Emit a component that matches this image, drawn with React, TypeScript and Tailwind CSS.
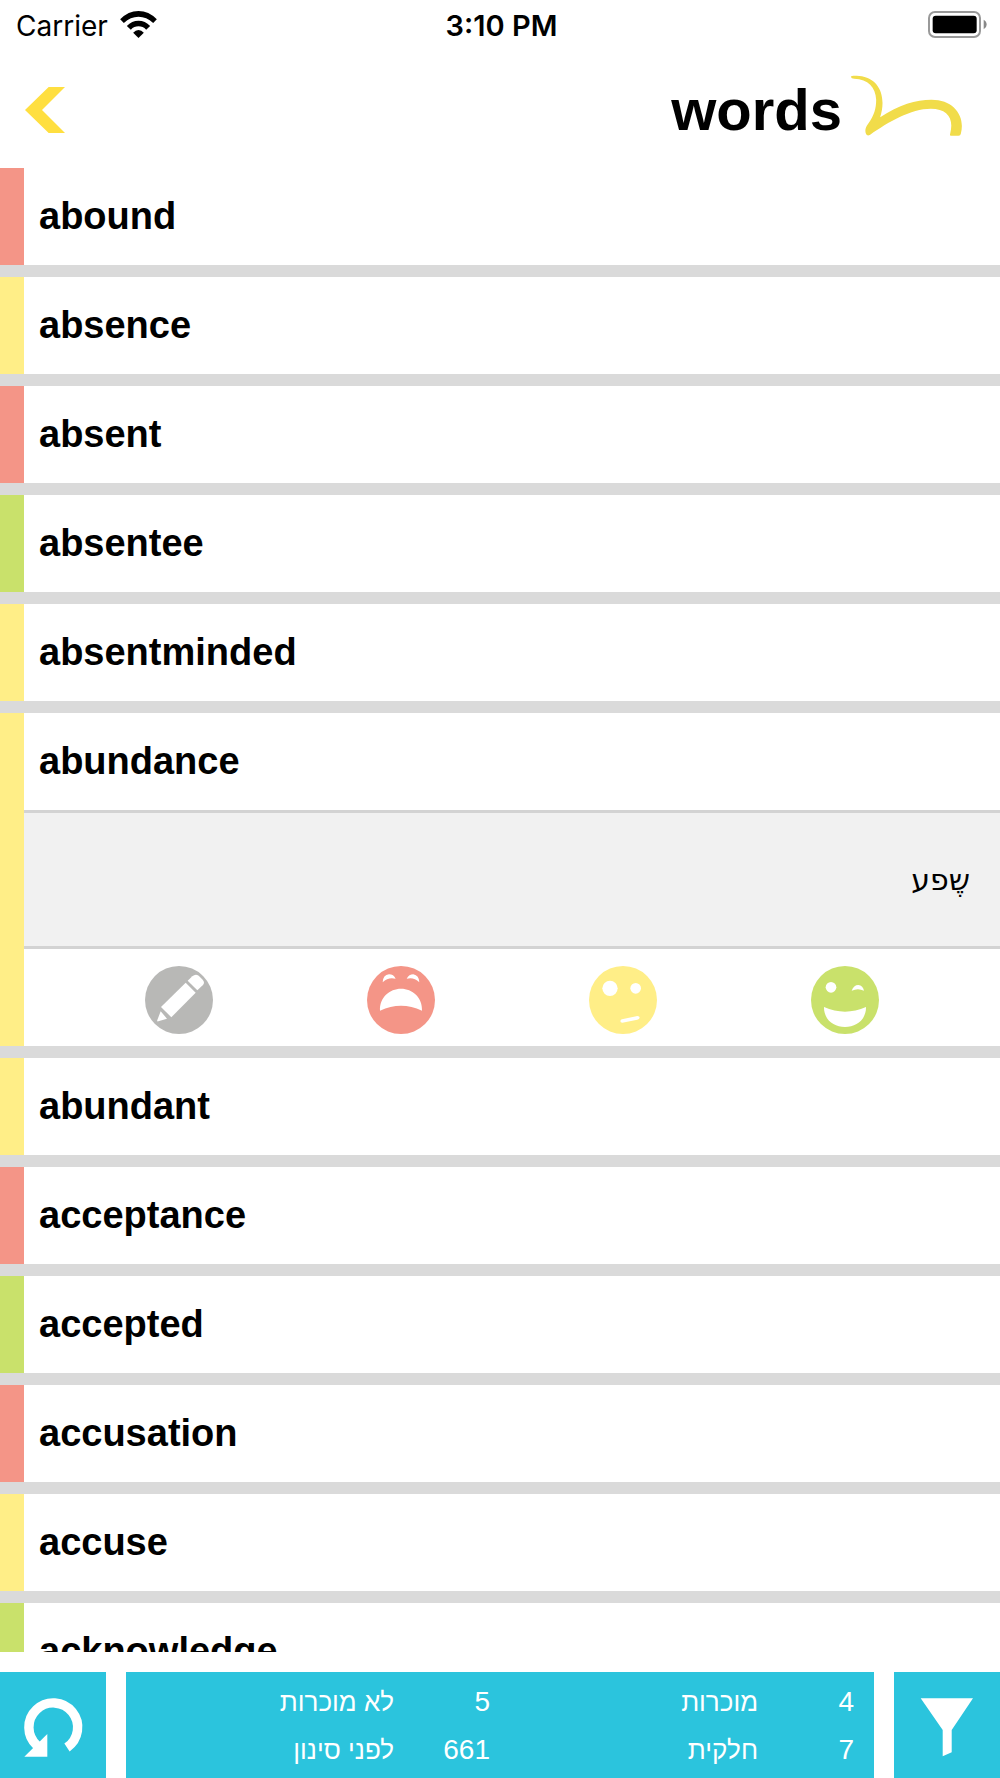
import { useState } from "react";
import type { ReactNode } from "react";
import { clsx } from "clsx";

type Level = "known" | "partial" | "unknown";

type Word = {
  text: string;
  level: Level;
  translation?: string;
};

const words: Word[] = [
  { text: "abound", level: "unknown" },
  { text: "absence", level: "partial" },
  { text: "absent", level: "unknown" },
  { text: "absentee", level: "known" },
  { text: "absentminded", level: "partial" },
  { text: "abundance", level: "partial", translation: "שֶפע" },
  { text: "abundant", level: "partial" },
  { text: "acceptance", level: "unknown" },
  { text: "accepted", level: "known" },
  { text: "accusation", level: "unknown" },
  { text: "accuse", level: "partial" },
  { text: "acknowledge", level: "known" },
];

const levelColors: Record<Level, string> = {
  known: "border-[#c9e16b]",
  partial: "border-[#ffee87]",
  unknown: "border-[#f49587]",
};

const stats = [
  { label: "מוכרות", value: 4 },
  { label: "לא מוכרות", value: 5 },
  { label: "חלקית", value: 7 },
  { label: "לפני סינון", value: 661 },
];

function StatusBar() {
  return (
    <div className="grid h-[52px] grid-cols-3 items-center pr-[13px] pl-4 font-[Inter,sans-serif] text-[28px]">
      <div className="flex items-center gap-3">
        <span>Carrier</span>
        <svg className="mb-1 h-[27px] w-[37px]" viewBox="0 0 110 81" aria-hidden="true">
          <path d="M0 25Q24 0 55 0Q86 0 110 25L99 36Q79 17 55 17Q31 17 11 36Z" />
          <path d="M20 45Q35 29 55 29Q75 29 90 45L78 56Q68 46 55 46Q42 46 32 56Z" />
          <path d="M39 65Q46 57 55 57Q64 57 71 65L55 81Z" />
        </svg>
      </div>
      <span className="text-center text-[29px] font-semibold">3:10 PM</span>
      <svg className="mb-1 h-[27px] w-[59px] justify-self-end" viewBox="0 0 177 81" aria-hidden="true">
        <rect x="3" y="3" width="153" height="75" rx="18" fill="none" stroke="#999" strokeWidth="6" />
        <rect x="14" y="14" width="132" height="53" rx="9" />
        <path d="M167 26Q176 31 176 41Q176 50 167 55Z" fill="#888" />
      </svg>
    </div>
  );
}

function Header() {
  return (
    <header className="flex h-[116px] items-center justify-between pr-[37px] pl-[25px]">
      <button type="button" aria-label="Back">
        <svg className="h-[46px] w-10" viewBox="0 0 120 138" fill="#ffdf40" aria-hidden="true">
          <path d="M71 0H120L51 69L120 138H71L0 69Z" />
        </svg>
      </button>
      <div className="flex items-center gap-2">
        <h1 className="text-[58px] leading-none font-bold">words</h1>
        <svg className="mb-2 h-[62px] w-[113px]" viewBox="628 226 338 186" fill="#f1dc4a" aria-hidden="true">
          <path d="M630 231C632 227 645 228 655 229C715 234 738 290 718 353C775 315 825 300 872 300C940 300 974 350 960 402Q959 408 953 408H930Q926 408 928 402C940 356 920 327 870 327C810 327 742 367 688 405Q680 410 676 404C671 393 674 382 682 372C700 347 706 326 706 300C704 262 682 239 640 237Q631 237 630 231Z" />
        </svg>
      </div>
    </header>
  );
}

function RateButton({ label, color, children }: { label: string; color: string; children: ReactNode }) {
  return (
    <button type="button" aria-label={label}>
      <svg className="size-[68px]" viewBox="0 0 204 204" fill="#fff" aria-hidden="true">
        <circle cx="102" cy="102" r="102" fill={color} />
        {children}
      </svg>
    </button>
  );
}

function WordDetails({ translation }: { translation: string }) {
  return (
    <>
      <div
        dir="rtl"
        className="flex h-[139px] items-center border-y-3 border-[#d3d3d3] bg-[#f1f1f1] px-[30px] font-['DejaVu_Sans',sans-serif] text-[30px]"
      >
        <p lang="he">{translation}</p>
      </div>
      <div className="flex h-[97px] items-center justify-between px-[121px] pt-1">
        <RateButton label="Edit" color="#b8b8b6">
          <path d="M47 136L66 158L40 166Q35 167 37 162Z" />
          <path d="M48 123L122 50L152 80L79 154Z" />
          <path d="M128 44L142 31Q151 23 161 29L173 41Q181 50 173 58L157 73Z" />
        </RateButton>
        <RateButton label="Unknown" color="#f49587">
          <path d="M47 49Q48 27 66 25Q80 25 86 38Q64 32 47 49Z" />
          <path d="M119 38Q126 25 139 25Q156 28 157 49Q140 32 119 38Z" />
          <path d="M39 134C37 94 68 68 102 68C136 68 167 94 165 134Q102 104 39 134Z" />
        </RateButton>
        <RateButton label="Partly known" color="#ffee87">
          <circle cx="63" cy="67" r="23" />
          <circle cx="140" cy="67" r="16" />
          <path d="M99 160L145 150Q152 150 152 155Q151 159 145 161L100 170Q94 170 94 165Q95 161 99 160Z" />
        </RateButton>
        <RateButton label="Known" color="#c9e16b">
          <circle cx="60" cy="64" r="16" />
          <path d="M122 74Q128 57 142 57Q156 59 159 74Q141 65 122 74Z" />
          <path d="M39 123Q102 151 165 123C166 160 137 183 102 183C67 183 38 160 39 123Z" />
        </RateButton>
      </div>
    </>
  );
}

export default function App() {
  const [openWord, setOpenWord] = useState("abundance");

  return (
    <div className="flex h-screen flex-col bg-white font-['Liberation_Sans',Arial,sans-serif] text-black">
      <StatusBar />
      <Header />

      <ul className="flex min-h-0 flex-1 flex-col gap-3 overflow-hidden bg-[#dadada]">
        {words.map((word) => (
          <li key={word.text} className={clsx("shrink-0 border-l-24 bg-white", levelColors[word.level])}>
            <button
              type="button"
              aria-expanded={openWord === word.text}
              onClick={() => setOpenWord(openWord === word.text ? "" : word.text)}
              className="flex h-[97px] w-full items-center px-[15px] text-[38px] font-bold"
            >
              {word.text}
            </button>
            {openWord === word.text && word.translation && <WordDetails translation={word.translation} />}
          </li>
        ))}
      </ul>

      <footer className="mt-5 flex h-[106px] shrink-0 gap-5 text-white">
        <button type="button" aria-label="Reset" className="w-[106px] bg-[#2bc4dd]">
          <svg viewBox="0 0 106 106" aria-hidden="true">
            <path d="M37 73.5A24.4 24.4 0 1 1 67 75.5" fill="none" stroke="#fff" strokeWidth="9.4" />
            <path d="M47.3 62V84.7H24.3Z" fill="#fff" />
          </svg>
        </button>
        <dl
          dir="rtl"
          className="grid flex-1 grid-cols-2 content-center bg-[#2bc4dd] pt-px pr-5 text-[28px] leading-[48px]"
        >
          {stats.map((stat) => (
            <div key={stat.label} className="flex items-baseline">
              <dt lang="he" className="order-last text-[26px]">
                {stat.label}
              </dt>
              <dd className="w-24">{stat.value}</dd>
            </div>
          ))}
        </dl>
        <button type="button" aria-label="Filter" className="w-[106px] bg-[#2bc4dd]">
          <svg viewBox="0 0 106 106" fill="#fff" aria-hidden="true">
            <path d="M26.7 26.3H79L57.7 58V80.3L48.7 84.3V58Z" />
          </svg>
        </button>
      </footer>
    </div>
  );
}
